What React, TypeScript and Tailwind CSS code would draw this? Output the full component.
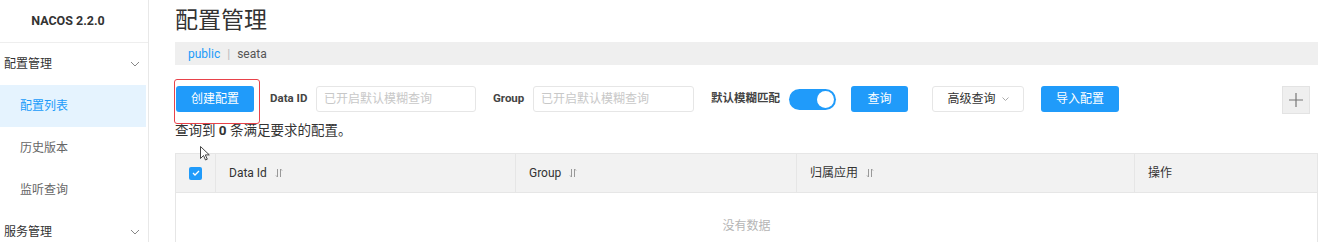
import React from "react";

const SortIcon = () => (
  <svg width="8" height="10" viewBox="0 0 8 10" className="ml-[8px] inline-block" fill="none" stroke="#999" strokeWidth="1">
    <path d="M2.5 1v8M1 7.5l1.5 1.5" />
    <path d="M5.5 9V1M7 2.5L5.5 1" />
  </svg>
);

const Chevron = () => (
  <svg width="10" height="6" viewBox="0 0 10 6" fill="none" stroke="#888" strokeWidth="1">
    <path d="M1 1l4 4 4-4" />
  </svg>
);

export default function App() {
  const font = { fontFamily: 'Roboto, "Noto Sans CJK SC", sans-serif' };
  return (
    <div className="flex w-[1322px] h-[242px] overflow-hidden bg-white text-[#333]" style={font}>
      {/* Sidebar */}
      <div className="w-[149px] shrink-0 border-r border-[#e8e8e8] flex flex-col">
        <div className="h-[43px] shrink-0 border-b border-[#eeeeee] flex items-center justify-center pr-[12px] text-[12.5px] font-bold text-[#333]">
          NACOS 2.2.0
        </div>
        <div className="h-[42px] shrink-0 flex items-center justify-between pl-[4px] pr-[8px] text-[12px] text-[#333]">
          <span>配置管理</span>
          <Chevron />
        </div>
        <div className="h-[42px] shrink-0 flex items-center pl-[20px] text-[12px] text-[#209bfa] bg-[#e5f3fe] mr-[2px]">配置列表</div>
        <div className="h-[42px] shrink-0 flex items-center pl-[20px] text-[12px] text-[#666]">历史版本</div>
        <div className="h-[42px] shrink-0 flex items-center pl-[20px] text-[12px] text-[#666]">监听查询</div>
        <div className="h-[42px] shrink-0 flex items-center justify-between pl-[4px] pr-[8px] text-[12px] text-[#333]">
          <span>服务管理</span>
          <Chevron />
        </div>
      </div>

      {/* Main */}
      <div className="flex-1 pl-[26px] pr-[4px] relative">
        <div className="h-[42px] flex items-center text-[23px] text-[#333] leading-none pb-[2px]">配置管理</div>
        <div className="h-[23px] bg-[#efefef] flex items-center pl-[13px] text-[12px]">
          <span className="text-[#209bfa]">public</span>
          <span className="mx-[7px] text-[#bbb]">|</span>
          <span className="text-[#555]">seata</span>
        </div>

        {/* toolbar */}
        <div className="flex items-center mt-[21px] h-[26px] text-[12px]">
          <div className="relative ml-[1px]">
            <button className="w-[78px] h-[26px] bg-[#209bfa] text-white rounded-[3px] text-[12px]">创建配置</button>
            <div className="absolute left-[-2px] top-[-7px] w-[86px] h-[45px] border border-[#e8424a] rounded-[3px] pointer-events-none" />
          </div>
          <span className="ml-[16px] w-[46px] shrink-0 font-bold text-[#444] text-[11.5px]">Data ID</span>
          <div className="w-[160px] h-[26px] border border-[#e6e6e6] rounded-[3px] flex items-center pl-[7px] text-[#c8c8c8]">已开启默认模糊查询</div>
          <span className="ml-[17px] w-[40px] shrink-0 font-bold text-[#444] text-[11.5px]">Group</span>
          <div className="w-[161px] h-[26px] border border-[#e6e6e6] rounded-[3px] flex items-center pl-[7px] text-[#c8c8c8]">已开启默认模糊查询</div>
          <span className="ml-[17px] w-[78px] shrink-0 font-semibold text-[#444] text-[11.5px] whitespace-nowrap">默认模糊匹配</span>
          <div className="w-[47px] h-[21px] rounded-full bg-[#209bfa] relative">
            <div className="absolute right-[2px] top-[2px] w-[17px] h-[17px] rounded-full bg-white" />
          </div>
          <button className="ml-[15px] w-[57px] h-[26px] bg-[#209bfa] text-white rounded-[3px] text-[12px]">查询</button>
          <div className="ml-[24px] w-[92px] h-[26px] border border-[#e6e6e6] rounded-[3px] flex items-center justify-center text-[#333]">
            <span>高级查询</span>
            <svg width="7" height="4" viewBox="0 0 7 4" className="ml-[6px]" fill="none" stroke="#aaa" strokeWidth="1"><path d="M0.5 0.5l3 3 3-3" /></svg>
          </div>
          <button className="ml-[17px] w-[78px] h-[26px] bg-[#209bfa] text-white rounded-[3px] text-[12px]">导入配置</button>
          <div className="ml-auto mr-[8px] w-[28px] h-[28px] mt-[2px] bg-[#efefef] border border-[#e3e3e3] flex items-center justify-center">
            <svg width="14" height="14" viewBox="0 0 14 14" fill="none" stroke="#777" strokeWidth="1.2"><path d="M7 0v14M0 7h14" /></svg>
          </div>
        </div>

        <div className="mt-[10px] text-[13.5px] text-[#333] leading-[16px]">
          查询到 <span className="font-bold">0</span> 条满足要求的配置。
        </div>

        {/* table */}
        <div className="mt-[15px] border border-[#e6e6e6]">
          <div className="flex h-[39px] bg-[#f2f2f2] border-b border-[#e6e6e6] text-[12px] text-[#333]">
            <div className="w-[40px] border-r border-[#e6e6e6] flex items-center justify-center">
              <div className="w-[13px] h-[13px] rounded-[2px] bg-[#209bfa] flex items-center justify-center">
                <svg width="8" height="6" viewBox="0 0 8 6" fill="none" stroke="white" strokeWidth="1.3"><path d="M1 3l2 2 4-4" /></svg>
              </div>
            </div>
            <div className="w-[300px] border-r border-[#e6e6e6] flex items-center pl-[13px]">Data Id<SortIcon /></div>
            <div className="w-[281px] border-r border-[#e6e6e6] flex items-center pl-[13px]">Group<SortIcon /></div>
            <div className="w-[338px] border-r border-[#e6e6e6] flex items-center pl-[13px]">归属应用<SortIcon /></div>
            <div className="flex-1 flex items-center pl-[13px]">操作</div>
          </div>
          <div className="h-[66px] flex items-start justify-center pt-[24px] text-[12px] text-[#b5b5b5]">没有数据</div>
        </div>

        {/* mouse cursor */}
        <svg className="absolute left-[51px] top-[146px]" width="10" height="15" viewBox="0 0 10 15">
          <path d="M0.5 0.5v12l3-3 2 4.5 1.8-0.8-2-4.3h4z" fill="white" stroke="#333" strokeWidth="0.9" strokeLinejoin="round" />
        </svg>
      </div>
    </div>
  );
}
